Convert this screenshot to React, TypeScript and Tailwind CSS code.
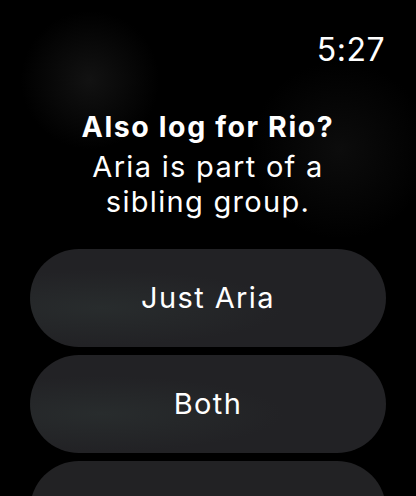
import React from "react";

export default function App() {
  const font = { fontFamily: "Inter, 'Noto Sans', sans-serif" };
  return (
    <div
      className="relative w-[416px] h-[496px] overflow-hidden bg-black text-white"
      style={font}
    >
      <div className="pointer-events-none absolute left-[20px] top-[10px] w-[140px] h-[140px] rounded-full bg-[radial-gradient(circle,rgba(40,40,40,0.45),rgba(0,0,0,0)_70%)]" />
      <div className="pointer-events-none absolute left-[250px] top-[60px] w-[180px] h-[180px] rounded-full bg-[radial-gradient(circle,rgba(30,30,30,0.4),rgba(0,0,0,0)_70%)]" />
      <div className="relative flex flex-col">
        <div className="flex justify-end pr-[31px] pt-[31px]">
          <span className="text-[32px] leading-[38px] tracking-[0.5px]">5:27</span>
        </div>
        <div className="mt-[40px] flex flex-col items-center text-center">
          <div className="text-[28.5px] leading-[36px] font-bold tracking-[1.6px]">Also log for Rio?</div>
          <div className="text-[29px] leading-[35px] mt-[4px] tracking-[1.3px]">
            Aria is part of a
            <br />
            sibling group.
          </div>
        </div>
        <div className="mt-[30px] flex flex-col gap-[8px] px-[30px]">
          <div className="h-[98px] rounded-full bg-[#222225] bg-[radial-gradient(ellipse_at_20%_60%,#282c2d,#222225_45%)] flex items-center justify-center">
            <span className="text-[29px] tracking-[1.4px]">Just Aria</span>
          </div>
          <div className="h-[98px] rounded-full bg-[#222225] bg-[radial-gradient(ellipse_at_20%_60%,#282c2d,#222225_45%)] flex items-center justify-center">
            <span className="text-[29px] tracking-[1.4px]">Both</span>
          </div>
          <div className="h-[98px] rounded-full bg-[#222224] flex items-center justify-center" />
        </div>
      </div>
    </div>
  );
}
